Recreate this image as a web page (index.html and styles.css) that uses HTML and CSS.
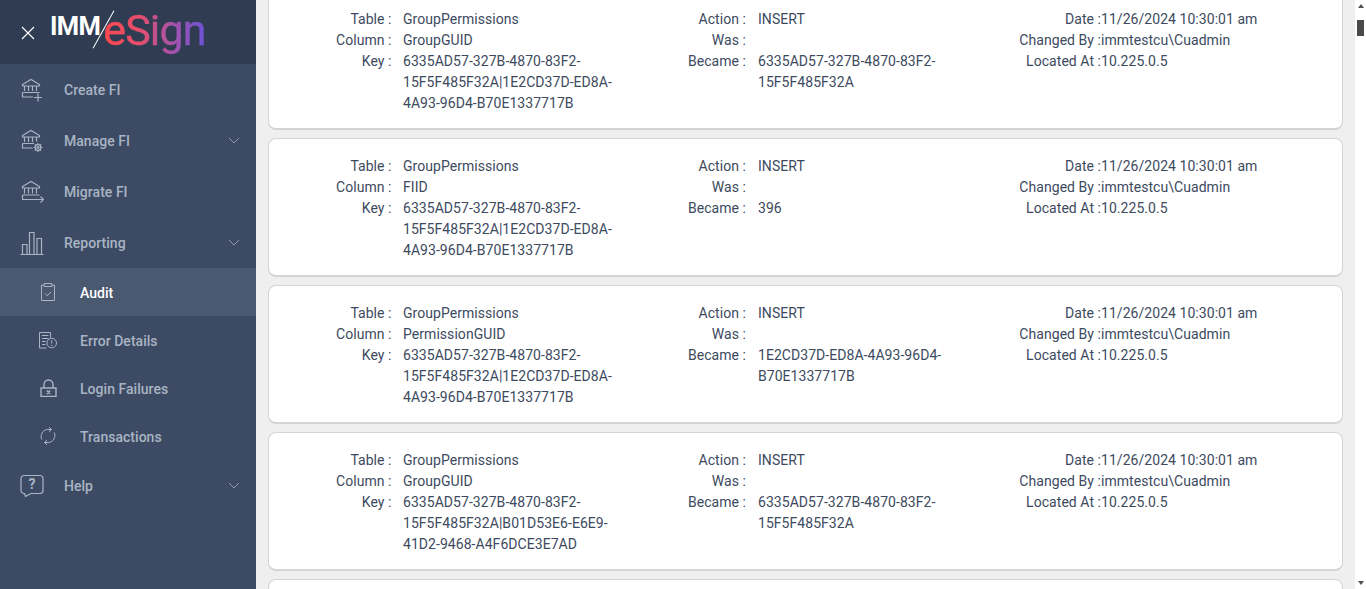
FILE: index.html
```html
<!DOCTYPE html>
<html lang="en">
<head>
<meta charset="utf-8">
<title>IMM eSign - Audit</title>
<link rel="stylesheet" href="styles.css">
</head>
<body>
<div class="app">
  <aside class="sidebar">
    <header class="brand">
      <svg class="close" viewBox="0 0 14 14"><path d="M1 1l12 12M13 1L1 13"/></svg>
      <div class="logo"><span class="logo-imm">IMM</span><i class="logo-slash"></i><span class="logo-esign">eSign</span></div>
    </header>
    <nav class="nav">
      <a class="item">
        <svg class="icon" viewBox="0 0 24 24"><path d="M2.500 6.500L11 1.500l8.500 5v1.500h-17zM4.500 8.500v4.500M8.500 8.500v4.500M12.500 8.500v4.500M16.500 8.500v4.500M2.500 14.500h17M2.500 14.500v4.500h10.500M18 15.500v8M14 19.500h8"/></svg>
        <span>Create FI</span>
      </a>
      <a class="item has-sub">
        <svg class="icon" viewBox="0 0 24 24"><path d="M2.500 6.500L11 1.500l8.500 5v1.500h-17zM4.500 8.500v4.500M8.500 8.500v4.500M12.500 8.500v4.500M16.500 8.500v4M2.500 14.500h11.500M2.500 14.500v4.500h10"/><circle cx="18" cy="18.500" r="2.800"/><circle cx="18" cy="18.500" r="1"/><path d="M18 14v1.700M18 21.300V23M13.500 18.500h1.700M20.800 18.500h1.700M14.800 15.300l1.200 1.200M20 20.500l1.200 1.200M21.200 15.300L20 16.500M16 20.500l-1.200 1.200"/></svg>
        <span>Manage FI</span>
        <svg class="chev" viewBox="0 0 12 7"><path d="M1 1l5 5 5-5"/></svg>
      </a>
      <a class="item">
        <svg class="icon" viewBox="0 0 24 24"><path d="M2.500 6.500L11 1.500l8.500 5v1.500h-17zM4.500 8.500v5M8.500 8.500v5M12.500 8.500v5M16.500 8.500v5M2.500 15h17M2.500 15v4.500h21M20.500 16.500l3 3-3 3"/></svg>
        <span>Migrate FI</span>
      </a>
      <a class="item has-sub">
        <svg class="icon" viewBox="0 0 24 24"><path d="M.5 23.500h23M2.500 23.500v-10h4.500v10M9.500 23.500V1.500H14v22M17 23.500V7.500h4.500v16"/></svg>
        <span>Reporting</span>
        <svg class="chev" viewBox="0 0 12 7"><path d="M1 1l5 5 5-5"/></svg>
      </a>
      <a class="sub active">
        <svg class="sub-icon" viewBox="0 0 18 18"><path d="M5 2H2.500v15.500h13V2H13M5 .5h8v3H5zM6 10.500l2.200 2.200L12 9"/></svg>
        <span>Audit</span>
      </a>
      <a class="sub">
        <svg class="sub-icon" viewBox="0 0 18 18"><path d="M7.500 17H.5V1.500h11V6.500M3 4.500h6.500M3 7.500h6.500M3 10.500h3.500M3 13.500h3.500"/><circle cx="12.700" cy="12" r="4.800"/><path d="M12.700 9.200v3.300M12.700 13.800v1.200"/></svg>
        <span>Error Details</span>
      </a>
      <a class="sub">
        <svg class="sub-icon sub-icon-bold" viewBox="0 0 18 18"><path d="M2 9h15v8.500H2zM5 9V5.500a4.500 4.500 0 0 1 9 0V9M7.800 11.500l3.400 3.500M11.200 11.500L7.800 15"/></svg>
        <span>Login Failures</span>
      </a>
      <a class="sub">
        <svg class="sub-icon" viewBox="0 0 18 18"><path d="M2.800 12.500A7 7 0 0 1 8.500 2.500H12.500M10 .3l2.500 2.200L10 4.800M15.200 5.500A7 7 0 0 1 9.500 15.500H5.500M8 13.200l-2.500 2.300L8 17.700"/></svg>
        <span>Transactions</span>
      </a>
      <a class="item has-sub">
        <svg class="icon" viewBox="0 0 24 24"><path d="M4 1.500h16a3 3 0 0 1 3 3v12a3 3 0 0 1-3 3H11l-5.500 2.800-1-2.800H4a3 3 0 0 1-3-3v-12a3 3 0 0 1 3-3z"/><text class="help-mark" x="12" y="15">?</text></svg>
        <span>Help</span>
        <svg class="chev" viewBox="0 0 12 7"><path d="M1 1l5 5 5-5"/></svg>
      </a>
    </nav>
  </aside>
  <main class="main">
    <div class="list">
      <article class="card">
        <dl class="col"><dt>Table :</dt><dd>GroupPermissions</dd><dt>Column :</dt><dd>GroupGUID</dd><dt>Key :</dt><dd>6335AD57-327B-4870-83F2-15F5F485F32A|1E2CD37D-ED8A-4A93-96D4-B70E1337717B</dd></dl>
        <dl class="col"><dt>Action :</dt><dd>INSERT</dd><dt>Was :</dt><dd></dd><dt>Became :</dt><dd>6335AD57-327B-4870-83F2-15F5F485F32A</dd></dl>
        <dl class="col col-meta"><dt>Date :</dt><dd>11/26/2024 10:30:01 am</dd><dt>Changed By :</dt><dd>immtestcu\Cuadmin</dd><dt>Located At :</dt><dd>10.225.0.5</dd></dl>
      </article>
      <article class="card">
        <dl class="col"><dt>Table :</dt><dd>GroupPermissions</dd><dt>Column :</dt><dd>FIID</dd><dt>Key :</dt><dd>6335AD57-327B-4870-83F2-15F5F485F32A|1E2CD37D-ED8A-4A93-96D4-B70E1337717B</dd></dl>
        <dl class="col"><dt>Action :</dt><dd>INSERT</dd><dt>Was :</dt><dd></dd><dt>Became :</dt><dd>396</dd></dl>
        <dl class="col col-meta"><dt>Date :</dt><dd>11/26/2024 10:30:01 am</dd><dt>Changed By :</dt><dd>immtestcu\Cuadmin</dd><dt>Located At :</dt><dd>10.225.0.5</dd></dl>
      </article>
      <article class="card">
        <dl class="col"><dt>Table :</dt><dd>GroupPermissions</dd><dt>Column :</dt><dd>PermissionGUID</dd><dt>Key :</dt><dd>6335AD57-327B-4870-83F2-15F5F485F32A|1E2CD37D-ED8A-4A93-96D4-B70E1337717B</dd></dl>
        <dl class="col"><dt>Action :</dt><dd>INSERT</dd><dt>Was :</dt><dd></dd><dt>Became :</dt><dd>1E2CD37D-ED8A-4A93-96D4-B70E1337717B</dd></dl>
        <dl class="col col-meta"><dt>Date :</dt><dd>11/26/2024 10:30:01 am</dd><dt>Changed By :</dt><dd>immtestcu\Cuadmin</dd><dt>Located At :</dt><dd>10.225.0.5</dd></dl>
      </article>
      <article class="card">
        <dl class="col"><dt>Table :</dt><dd>GroupPermissions</dd><dt>Column :</dt><dd>GroupGUID</dd><dt>Key :</dt><dd>6335AD57-327B-4870-83F2-15F5F485F32A|B01D53E6-E6E9-41D2-9468-A4F6DCE3E7AD</dd></dl>
        <dl class="col"><dt>Action :</dt><dd>INSERT</dd><dt>Was :</dt><dd></dd><dt>Became :</dt><dd>6335AD57-327B-4870-83F2-15F5F485F32A</dd></dl>
        <dl class="col col-meta"><dt>Date :</dt><dd>11/26/2024 10:30:01 am</dd><dt>Changed By :</dt><dd>immtestcu\Cuadmin</dd><dt>Located At :</dt><dd>10.225.0.5</dd></dl>
      </article>
      <article class="card"></article>
    </div>
  </main>
  <div class="scrollbar">
    <i class="arrow-up"></i>
    <i class="thumb"></i>
    <i class="arrow-down"></i>
  </div>
</div>
</body>
</html>
```
FILE: styles.css
```css
* { box-sizing: border-box; }
html, body { margin: 0; height: 100%; overflow: hidden; }
body { font-family: Roboto, "Liberation Sans", sans-serif; font-size: 14px; color: #3d4a60; background: #efefef; }
.app { display: flex; height: 589px; overflow: hidden; }

.sidebar { flex: 0 0 256px; background: #3c4b63; display: flex; flex-direction: column; }
.brand { flex: 0 0 64px; background: #2f3c52; display: flex; align-items: center; padding-left: 21px; gap: 15px; position: relative; }
.close { width: 14px; height: 14px; fill: none; stroke: #fff; stroke-width: 1.2; margin-top: 2px; }
.logo { display: flex; align-items: baseline; height: 50px; width: 160px; margin-top: -4px; }
.logo-imm { font: 700 25.500px/50px Roboto, sans-serif; color: #fff; letter-spacing: -.6px; transform: translateY(-10px); }
.logo-esign { font: 400 43px/50px Roboto, sans-serif; letter-spacing: -.9px; margin-left: 3px; -webkit-text-stroke: .4px transparent; background: linear-gradient(90deg, #fb484e 0%, #e64f6c 35%, #a653ab 68%, #6a52d8 100%); -webkit-background-clip: text; background-clip: text; color: transparent; }
.logo-slash { position: absolute; left: 103px; top: 7.500px; width: 1px; height: 43px; background: #fff; transform: rotate(29deg); }

.nav { display: flex; flex-direction: column; }
.item, .sub { display: flex; align-items: center; color: #a9b4c4; font-weight: 500; letter-spacing: .03px; }
.item { height: 51px; padding-left: 20px; }
.item > span { margin-left: 20px; }
.sub { height: 48px; padding-left: 39px; }
.sub > span { margin-left: 23px; margin-top: 2px; }
.sub.active { background: #4a5870; color: #fff; }
.icon { width: 24px; height: 24px; fill: none; stroke: #a9b4c4; stroke-width: 1.200; flex: none; }
.sub-icon { width: 18px; height: 18px; fill: none; stroke: #a9b4c4; stroke-width: 1; flex: none; }
.sub-icon-bold { stroke-width: 1.400; }
.chev { width: 12px; height: 7px; fill: none; stroke: #8f9bad; stroke-width: 1; margin-left: auto; margin-right: 16px; }
.help-mark { font: 700 14px Roboto, sans-serif; fill: #a9b4c4; stroke: none; text-anchor: middle; }

.main { flex: 1; min-width: 0; overflow: hidden; padding: 0 12px; }
.list { display: flex; flex-direction: column; gap: 8px; margin-top: -9px; }
.card { flex: 0 0 139px; background: #fff; border: 1px solid #d4d4d4; border-bottom-width: 2px; border-radius: 8px; padding: 17px 0 0 0; display: grid; grid-template-columns: 344px 355px 1fr; line-height: 21px; letter-spacing: .05px; }
.col { margin: 0; display: grid; align-content: start; grid-template-columns: 122.500px 212px; column-gap: 11.500px; }
.col + .col { grid-template-columns: 133px 190px; column-gap: 12px; }
.col.col-meta { grid-template-columns: 143px 1fr; column-gap: 0; margin-left: -10px; }
.col dt { text-align: right; }
.col dd { margin: 0; min-height: 21px; }

.scrollbar { flex: 0 0 11px; background: #fff; display: flex; flex-direction: column; align-items: center; }
.arrow-up, .arrow-down { width: 0; height: 0; border-left: 3.500px solid transparent; border-right: 3.500px solid transparent; }
.arrow-up { border-bottom: 4px solid #505050; margin-top: 4px; }
.arrow-down { border-top: 4px solid #505050; margin-top: auto; margin-bottom: 4px; }
.thumb { width: 7px; height: 16px; background: #4a4a4a; margin-top: 12px; }
```
